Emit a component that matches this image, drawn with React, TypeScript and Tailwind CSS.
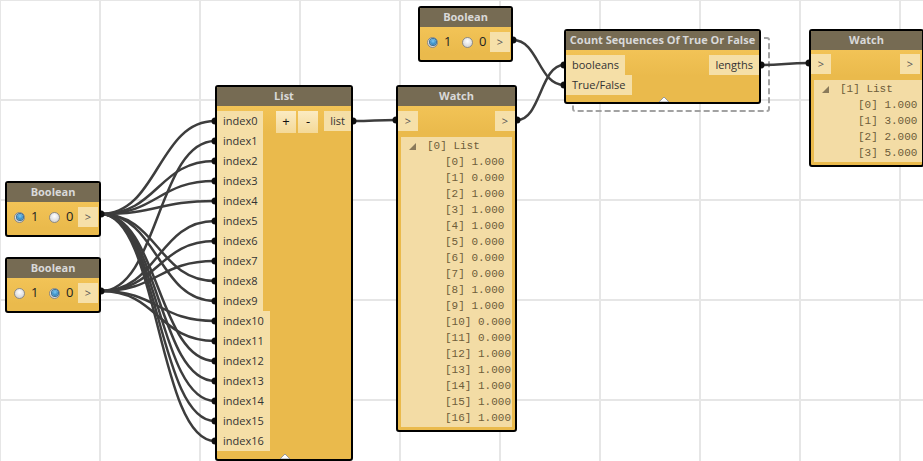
import React from "react";

type Wire = { x1: number; y1: number; x2: number; y2: number };

// values fed into the List node, 1 = top Boolean (true), 0 = lower Boolean (false)
const VALUES = [1, 0, 1, 1, 1, 0, 0, 0, 1, 1, 0, 0, 1, 1, 1, 1, 1];

const WIRES: Wire[] = [
  ...VALUES.map((v, i) => ({ x1: 101, y1: v ? 214 : 291, x2: 215, y2: 121 + 20 * i })),
  { x1: 353, y1: 121, x2: 396, y2: 120 },
  { x1: 517, y1: 120, x2: 564, y2: 65 },
  { x1: 513, y1: 40, x2: 564, y2: 85 },
  { x1: 761, y1: 65, x2: 809, y2: 63 },
];

const PORTS = [
  [101, 214], [101, 291], [513, 40],
  ...VALUES.map((_, i) => [215, 121 + 20 * i]),
  [353, 121], [396, 120], [517, 120], [564, 65], [564, 85], [761, 65], [809, 63],
];

function curve(w: Wire) {
  const d = Math.max(Math.abs(w.x2 - w.x1) * 0.5, 12);
  return `M${w.x1} ${w.y1} C${w.x1 + d} ${w.y1} ${w.x2 - d} ${w.y2} ${w.x2} ${w.y2}`;
}

const SANS = "font-['Open_Sans',sans-serif]";

function Node({ title, className = "", children }: { title: string; className?: string; children?: React.ReactNode }) {
  return (
    <div className={`absolute flex flex-col overflow-hidden rounded-[3px] border-2 border-black bg-[linear-gradient(to_bottom,#f8ca5e,#eaba4c_45px)] ${SANS} ${className}`}>
      <div className="flex h-[19px] shrink-0 items-center justify-center bg-[#766b53] text-[11px] font-bold text-[#d9d9d9]">
        {title}
      </div>
      <div className="relative flex min-h-0 flex-1 flex-col">{children}</div>
    </div>
  );
}

function Label({ children, className = "" }: { children: React.ReactNode; className?: string }) {
  return (
    <div className={`flex h-[20px] items-center bg-[#f5dfa7] text-[11px] text-[#333] ${className}`}>{children}</div>
  );
}

function Arrow({ className = "" }: { className?: string }) {
  return (
    <div className={`flex h-[20px] w-[20px] items-center justify-center bg-[#f6e0a9] text-[11px] text-[#555] ${className}`}>
      &gt;
    </div>
  );
}

function Radio({ on }: { on: boolean }) {
  return (
    <span className="flex h-[11px] w-[11px] items-center justify-center rounded-full border border-[#8a8a8a] bg-[radial-gradient(circle_at_50%_35%,#ffffff,#c9c9c9)]">
      {on && <span className="h-[6px] w-[6px] rounded-full bg-[radial-gradient(circle_at_50%_35%,#7cc8f2,#0e6aab)] ring-1 ring-[#3a6f95]" />}
    </span>
  );
}

function BooleanBody({ value }: { value: boolean }) {
  return (
    <div className="flex items-start pr-[1px] pt-[5px]">
      <div className="flex h-[20px] items-center pl-[7px] text-[13px] text-[#222]">
        <div className="flex w-[35px] items-center">
          <Radio on={value} />
          <span className="ml-[6px]">1</span>
        </div>
        <div className="flex items-center">
          <Radio on={!value} />
          <span className="ml-[6px]">0</span>
        </div>
      </div>
      <Arrow className="ml-auto" />
    </div>
  );
}

function Notch({ className = "" }: { className?: string }) {
  return (
    <svg className={`absolute bottom-0 ${className}`} width="12" height="6" viewBox="0 0 12 6">
      <polygon points="1,6 6,1 11,6" fill="#ffffff" stroke="#9a9a9a" strokeWidth="1" />
    </svg>
  );
}

function WatchPanel({ head, items, className = "" }: { head: string; items: string[]; className?: string }) {
  return (
    <div className={`mx-[3px] mb-[3px] flex-1 bg-[#f3dca5] pt-[1px] font-['Liberation_Mono',monospace] text-[11px] leading-[16px] text-[#6e5d3a] ${className}`}>
      <div className="flex items-center">
        <svg className="ml-[8px]" width="7" height="7" viewBox="0 0 7 7">
          <polygon points="7,0 7,7 0,7" fill="#8a7a5a" />
        </svg>
        <span className="ml-[11px] whitespace-pre">{head}</span>
      </div>
      {items.map((t) => (
        <div key={t} className="whitespace-pre pl-[44px]">{t}</div>
      ))}
    </div>
  );
}

export default function App() {
  const watchItems = VALUES.map((v, i) => `[${i}] ${v.toFixed(3)}`);
  const lengths = ["[0] 1.000", "[1] 3.000", "[2] 2.000", "[3] 5.000"];

  return (
    <div className="relative h-[461px] w-[923px] overflow-hidden bg-white bg-[linear-gradient(to_right,#e6e6e6_2px,transparent_2px),linear-gradient(to_bottom,#e6e6e6_2px,transparent_2px)] bg-[size:100px_100px] bg-[position:-1px_-1px]">
      {/* wires and ports sit under the nodes */}
      <svg className="absolute inset-0" width="923" height="461">
        <rect x="573" y="38" width="196" height="73" rx="2" fill="none" stroke="#a2a2a2" strokeWidth="2" strokeDasharray="6 3" />
        {WIRES.map((w, i) => (
          <path key={i} d={curve(w)} fill="none" stroke="#3d3d3d" strokeWidth="2.5" />
        ))}
        {PORTS.map(([x, y], i) => (
          <circle key={i} cx={x} cy={y} r="3.5" fill="#111" />
        ))}
      </svg>

      <Node title="Boolean" className="left-[5px] top-[181px] h-[56px] w-[96px]">
        <BooleanBody value={true} />
      </Node>
      <Node title="Boolean" className="left-[5px] top-[257px] h-[56px] w-[96px]">
        <BooleanBody value={false} />
      </Node>
      <Node title="Boolean" className="left-[418px] top-[6px] h-[56px] w-[95px]">
        <BooleanBody value={true} />
      </Node>

      <Node title="List" className="left-[215px] top-[85px] h-[376px] w-[138px]">
        <div className="flex items-start pt-[5px]">
          <div className="flex w-[53px] shrink-0 flex-col items-start">
            {VALUES.map((_, i) => (
              <Label key={i} className={i < 10 ? "w-[46px] pl-[6px]" : "w-[53px] pl-[6px]"}>
                index{i}
              </Label>
            ))}
          </div>
          <div className="ml-[6px] flex gap-[2px] text-[13px] text-[#111]">
            <div className="flex h-[22px] w-[20px] items-center justify-center bg-[linear-gradient(to_bottom,#fbebc2,#f4d998)]">+</div>
            <div className="flex h-[22px] w-[20px] items-center justify-center bg-[linear-gradient(to_bottom,#fbebc2,#f4d998)]">-</div>
          </div>
          <Label className="ml-auto w-[27px] justify-center">list</Label>
        </div>
        <Notch className="left-[62px]" />
      </Node>

      <Node title="Watch" className="left-[396px] top-[85px] h-[347px] w-[121px]">
        <div className="flex justify-between pt-[5px]">
          <Arrow />
          <Arrow />
        </div>
        <WatchPanel head="[0] List" items={watchItems} className="mt-[6px]" />
      </Node>

      <Node title="Count Sequences Of True Or False" className="left-[564px] top-[29px] h-[75px] w-[197px]">
        <div className="flex items-start pt-[5px]">
          <div className="flex flex-col items-start">
            <Label className="px-[6px]">booleans</Label>
            <Label className="px-[6px]">True/False</Label>
          </div>
          <Label className="ml-auto px-[6px]">lengths</Label>
        </div>
        <Notch className="left-[92px]" />
      </Node>

      <Node title="Watch" className="left-[809px] top-[29px] h-[138px] w-[115px]">
        <div className="flex justify-between pr-[2px] pt-[4px]">
          <Arrow />
          <Arrow />
        </div>
        <WatchPanel head="[1] List" items={lengths} className="mr-0 mt-[6px]" />
      </Node>
    </div>
  );
}
